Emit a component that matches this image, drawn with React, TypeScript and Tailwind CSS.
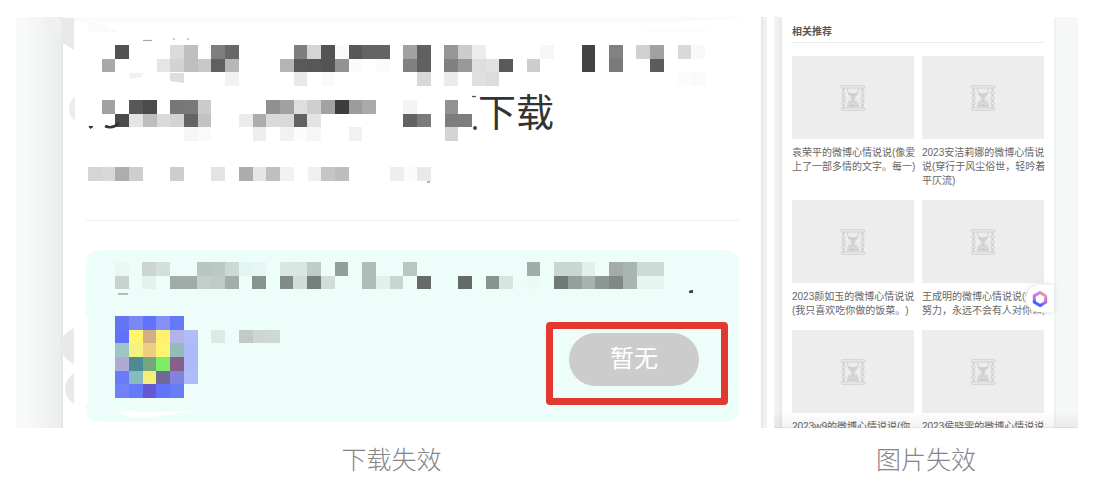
import React from 'react';

type MosaicRow = Record<number, string>;

interface MosaicProps {
  rows: MosaicRow[];
  cols: number;
  start?: number;
  className: string;
}

interface Article {
  id: number;
  lines: string[];
}

const titleTop: MosaicRow[] = [
  {
    2: '#535353', 6: '#dadada', 7: '#bfbfbf', 9: '#7e7e7e', 10: '#686868', 15: '#7f7f7f', 16: '#d5d5d5', 17: '#535353',
    18: '#fafafa', 19: '#585858', 20: '#646464', 21: '#646464', 23: '#a2a2a2', 24: '#606060', 26: '#969696', 27: '#cccccc',
    28: '#ececec', 33: '#f7f7f7', 36: '#434343', 38: '#818181', 40: '#d0d0d0', 41: '#a2a2a2', 43: '#d9d9d9', 44: '#f9f9f9',
  },
  {
    1: '#a9a9a9', 5: '#e5e5e5', 6: '#d3d3d3', 7: '#bfbfbf', 8: '#c8c8c8', 9: '#606060', 10: '#b7b7b7', 14: '#b5b5b5',
    15: '#595959', 16: '#575757', 17: '#535353', 18: '#929292', 19: '#fbfbfb', 21: '#fafafa', 23: '#808080', 24: '#606060',
    26: '#808080', 27: '#999999', 28: '#dedede', 29: '#e2e2e2', 30: '#5a5a5a', 32: '#cdcdcd', 36: '#434343', 38: '#7a7a7a',
    41: '#5c5c5c',
  },
  {
    10: '#f2f2f2', 15: '#e9e9e9', 17: '#fafafa', 24: '#d8d8d8', 26: '#ebebeb', 28: '#e0e0e0', 29: '#dcdcdc', 43: '#fcfcfc',
    44: '#fafafa',
  },
];

const titleBottom: MosaicRow[] = [
  {
    1: '#a2a2a2', 3: '#575757', 4: '#4b4b4b', 6: '#777777', 7: '#797979', 8: '#cbcbcb', 13: '#909090', 14: '#a1a1a1',
    15: '#dedede', 16: '#cfcfcf', 17: '#a2a2a2', 18: '#3c3c3c', 19: '#9c9c9c', 20: '#aaaaaa', 23: '#f4f4f4', 26: '#929292',
  },
  {
    2: '#4b4b4b', 3: '#e5e5e5', 4: '#bdbdbd', 5: '#dadada', 6: '#d3d3d3', 7: '#636363', 8: '#c3c3c3', 11: '#ebebeb',
    12: '#adadad', 13: '#dadada', 14: '#d9d9d9', 15: '#626262', 16: '#e3e3e3', 23: '#626262', 24: '#7b7b7b', 26: '#7d7d7d',
    27: '#7d7d7d',
  },
  { 7: '#f6f6f6', 8: '#fafafa', 12: '#eeeeee', 14: '#f1f1f1', 15: '#fcfcfc', 16: '#f6f6f6', 19: '#f1f1f1', 26: '#d4d4d4' },
];

const metaRow: MosaicRow[] = [
  {
    0: '#d5d5d5', 1: '#d8d8d8', 2: '#adadad', 3: '#cecece', 6: '#cdcdcd', 9: '#e3e3e3', 11: '#acacac', 12: '#e6e6e6',
    13: '#bfbfbf', 14: '#f1f1f1', 16: '#f0f0f0', 17: '#c5c5c5', 18: '#bebebe', 22: '#eeeeee', 23: '#fbfbfb', 24: '#e9e9e9',
  },
];

const cardRows: MosaicRow[] = [
  {
    2: '#e8f9f4', 4: '#cbd6d2', 5: '#d3dfdb', 8: '#bac5c1', 9: '#bbc8c3', 10: '#ccdad5', 11: '#e2f5f0', 12: '#e5f7f2',
    14: '#d9e7e2', 15: '#d8e6e1', 16: '#bfccc8', 18: '#949e9b', 20: '#b0bcb8', 23: '#bac6c2', 32: '#a2ada9', 34: '#cad6d2',
    35: '#cad6d2', 36: '#e1f0eb', 38: '#a2ada9', 39: '#a9b5b1', 40: '#cddbd6', 41: '#cddbd6',
  },
  {
    2: '#c8d3cf', 4: '#e2f3ee', 6: '#a1aca9', 7: '#a1aca9', 8: '#c4cfcb', 9: '#c0cbc7', 10: '#a3aeab', 12: '#88928f',
    14: '#808a87', 15: '#d1ddd9', 16: '#777f7d', 17: '#d0ddd8', 20: '#b0bcb8', 21: '#e0f0eb', 22: '#c9d5d1', 24: '#636a68',
    27: '#636a68', 29: '#89938f', 30: '#d7e5e0', 32: '#eafbf6', 34: '#717977', 35: '#94a09c', 36: '#a7b3af', 37: '#8d9895',
    38: '#808886', 39: '#a9b5b1', 40: '#e5f6f1', 41: '#e5f6f1',
  },
];

const appRows: MosaicRow[] = [
  { 0: '#6675f3', 1: '#7a88f6', 2: '#6272fb', 3: '#8490f5', 4: '#6679f8' },
  { 0: '#6072fb', 1: '#fff66c', 2: '#d3ae83', 3: '#fff170', 4: '#b1b3e9', 5: '#b0bdf9', 7: '#dceae6', 9: '#c0cbc7', 10: '#ccd7d4', 11: '#ced9d6' },
  { 0: '#9ec6c6', 1: '#f6f281', 2: '#edcf84', 3: '#fff471', 4: '#92bbbc', 5: '#aeb9f9' },
  { 0: '#afa9d6', 1: '#4c8b94', 2: '#78a57e', 3: '#7cec6b', 4: '#875f87', 5: '#aeb9f9' },
  { 0: '#687bf9', 1: '#89bac0', 2: '#f5ef7a', 3: '#716995', 4: '#8184de', 5: '#aebcfb' },
  { 0: '#7082f6', 1: '#667af8', 2: '#6658d0', 3: '#6373f9', 4: '#667df6' },
];

const articles: Article[] = [
  { id: 1, lines: ['袁荣平的微博心情说说(像爱', '上了一部多情的文字。每一)'] },
  { id: 2, lines: ['2023安洁莉娜的微博心情说', '说(穿行于风尘俗世，轻吟着', '平仄流)'] },
  { id: 3, lines: ['2023颜如玉的微博心情说说', '(我只喜欢吃你做的饭菜。)'] },
  { id: 4, lines: ['王成明的微博心情说说(你', '努力，永远不会有人对你么,'] },
  { id: 5, lines: ['2023w9的微博心情说说(你'] },
  { id: 6, lines: ['2023侯晓雯的微博心情说说'] },
];

const Mosaic: React.FC<MosaicProps> = ({ rows, cols, start = 0, className }) => (
  <svg
    className={className}
    viewBox={`${start} 0 ${cols} ${rows.length}`}
    preserveAspectRatio="none"
    shapeRendering="crispEdges"
    aria-hidden="true"
  >
    {rows.map((row, y) =>
      Object.entries(row).map(([x, fill]) => (
        <rect key={`${x}-${y}`} x={Number(x)} y={y} width="1" height="1" fill={fill} />
      ))
    )}
  </svg>
);

// Brush marks left around the censored text
const Smudges = () => (
  <svg className="absolute left-0 top-0 pointer-events-none" width="751" height="411" viewBox="16 17 751 411" aria-hidden="true">
    <path d="M63 17h685q-40 5-100 5H74z" fill="#fbfbfb" />
    <path d="M88 22l12 1 20 9H88z" fill="#fafafa" />
    <path d="M605 32q50 0 70-5 25 1 38 5z" fill="#fcfcfc" />
    <path d="M61 18h13v32L61 42z" fill="#e8e9eb" />
    <path d="M54 19h7v21q-8-9-7-21z" fill="#eff1f1" />
    <path d="M75 96v25q-6-5-6-12t6-13z" fill="#ebecee" />
    <path d="M74 328v36q-13-6-13-19 1-12 13-17z" fill="#e8e9eb" />
    <path d="M74 373v31q-9-6-9-15 0-10 9-16z" fill="#e8e9eb" />
    <path d="M129 73h14l-1 4-12 2z" fill="#f2f2f2" />
    <path d="M170 73h14v10l-8-1-6-1z" fill="#dedede" />
    <path d="M143 40.5h9" stroke="#a8a8a8" strokeWidth="1.2" />
    <path d="M173 39h2M187 39h2" stroke="#bbb" strokeWidth="1.5" />
    <path d="M89 126.500h4l-2.500 2z" fill="#333" stroke="#333" />
    <path d="M105 126q5 2.500 10 0l4-3" fill="none" stroke="#333" strokeWidth="2.6" />
    <path d="M472 96.500h4" stroke="#555" strokeWidth="1.3" />
    <circle cx="475" cy="128" r="2" fill="#444" />
    <path d="M427 182h3" stroke="#999" strokeWidth="1.5" />
    <path d="M118 294h10" stroke="#9da5a2" strokeWidth="1.5" />
    <path d="M689 293v-2l2-1h2v3z" fill="#444" />
    <path d="M86 315l2 3v84l-2 3z" fill="#fff" />
    <path d="M118 411q50 2 86-1-22 3-46 6-34 4-40-5z" fill="#fff" />
  </svg>
);

const Hourglass = () => (
  <svg width="26" height="26" viewBox="0 0 26 26" fill="none" stroke="#d0d0d0" aria-hidden="true">
    <rect x="1" y="0.700" width="24" height="2.300" rx="1.100" />
    <rect x="1" y="23" width="24" height="2.300" rx="1.100" />
    <path d="M7.500 3.500q0 6.500 4.700 9.500-4.700 3-4.700 9.500M18.500 3.500q0 6.500-4.700 9.500 4.700 3 4.700 9.500" />
    <path d="M8 7q2.500 1.200 5 1.200T18 7q-1 3.400-4.200 5.300v2.700q3 1.300 4.500 7H7.700q1.500-5.700 4.500-7v-2.700Q9 10.400 8 7z" fill="#cfcfcf" stroke="none" />
    <path d="M10 20q3-4 6 0" stroke="#e6e6e6" />
    <path d="M3.500 3v3M3.500 9.500v2M3.500 14.500v2M3.500 19.500V23M22.500 3v3M22.500 9.500v2M22.500 14.500v2M22.500 19.500V23" strokeWidth="2" />
    <circle cx="3.500" cy="8" r="1.600" />
    <circle cx="3.500" cy="13" r="1.600" />
    <circle cx="3.500" cy="18" r="1.600" />
    <circle cx="22.500" cy="8" r="1.600" />
    <circle cx="22.500" cy="13" r="1.600" />
    <circle cx="22.500" cy="18" r="1.600" />
  </svg>
);

const HexLogo = () => (
  <svg width="16" height="18" viewBox="0 0 16 18" aria-hidden="true">
    <defs>
      <linearGradient id="hexTop" x1="0" y1="0.500" x2="1" y2="0.500">
        <stop offset="0" stopColor="#b673ee" />
        <stop offset="1" stopColor="#ff9c9a" />
      </linearGradient>
      <linearGradient id="hexRight" x1="0.500" y1="0" x2="0.500" y2="1">
        <stop offset="0" stopColor="#f391b4" />
        <stop offset="1" stopColor="#6d5cf5" />
      </linearGradient>
    </defs>
    <path d="M8 0.800L0.800 5v5l3-1V6.700L8 4.300l4.200 2.400L15.200 5z" fill="url(#hexTop)" />
    <path d="M15.200 5v8L8 17.200V13.700l4.200-2.400V6.700z" fill="url(#hexRight)" />
    <path d="M0.800 10V13L8 17.200l3.500-2L8 13.700l-4.200-2.400V9z" fill="#4a63ff" />
  </svg>
);

const App: React.FC = () => {
  return (
    <main className="bg-white pl-4 pr-[22px] pt-[17px] font-['Noto_Sans_CJK_SC','Liberation_Sans',sans-serif]">
      <div className="flex gap-[7px]">
        <figure className="flex-1 min-w-0">
          <div className="relative flex overflow-hidden">
            <div className="w-[47px] shrink-0 bg-linear-to-r from-[#f8faf9] from-20% to-[#eceeee] border-r-2 border-[#e5e7e7]"></div>
            <section className="flex-1 min-w-0 pl-[23px] pr-[22px] pt-7 pb-1.5 bg-white">
              <div className="pl-0.5">
                <Mosaic rows={titleTop} cols={45} className="block w-[617px] h-[41px]" />
                <div className="mt-[14px] flex items-start gap-1.5">
                  <Mosaic rows={titleBottom} cols={28} className="block w-[384px] h-[41px]" />
                  <h1 className="text-[38px] leading-5 text-[#333]">下载</h1>
                </div>
                <Mosaic rows={metaRow} cols={25} className="mt-[26px] block w-[343px] h-[14px]" />
              </div>
              <hr className="mt-[39px] border-0 h-px bg-[#efefef]" />
              <div className="mt-[29px] pt-3 pb-[17px] pl-[29px] pr-[11px] rounded-[13px] bg-[#edfefa]">
                <Mosaic rows={cardRows} cols={40} start={2} className="block w-[549px] h-[27px]" />
                <div className="mt-[27px] flex items-start justify-between">
                  <Mosaic rows={appRows} cols={12} className="block w-[165px] h-[82px]" />
                  <div className="mt-1.5 pl-4 pr-[22px] pt-1 pb-3 border-[7px] border-[#e1382f] rounded">
                    <button
                      type="button"
                      disabled
                      className="flex justify-center w-[130px] h-[53px] rounded-full bg-[#cccccc] text-white text-2xl leading-[48px]"
                    >
                      暂无
                    </button>
                  </div>
                </div>
              </div>
            </section>
            <div className="w-1.5 shrink-0 bg-[#f0f0f0] border-l-2 border-[#e6e7e7]"></div>
            <Smudges />
          </div>
          <figcaption className="mt-3 text-center text-[25px] leading-9 font-light text-[#858588]">下载失效</figcaption>
        </figure>

        <figure className="w-[304px] shrink-0">
          <div className="relative flex h-[411px] overflow-hidden bg-[#f6f8f8]">
            <div className="w-2 shrink-0 bg-linear-to-r from-[#f4f6f5] to-[#eaecec]"></div>
            <section className="relative w-[272px] shrink-0 px-2.5 pt-[7px] bg-white shadow-[0_0_3px_#dfe2e2]">
              <h2 className="h-[19px] text-[10px] leading-[14px] font-bold text-[#555] border-b border-[#ececec]">相关推荐</h2>
              <div className="mt-[13px] grid grid-cols-2 gap-x-2 gap-y-3">
                {articles.map((article) => (
                  <article key={article.id} className="min-w-0">
                    <div className="h-[83px] flex items-center justify-center bg-[#ededed]">
                      <Hourglass />
                    </div>
                    <h3 className="mt-[7px] text-[10px] leading-[14px] [text-spacing-trim:space-all] font-['Liberation_Sans','Noto_Sans_CJK_SC',sans-serif] text-[#666] whitespace-nowrap">
                      {article.lines.map((line) => (
                        <span key={line} className="block">{line}</span>
                      ))}
                    </h3>
                  </article>
                ))}
              </div>
              <button
                type="button"
                aria-label="助手"
                className="absolute right-0 top-[268px] w-7 h-[27px] flex items-center justify-center rounded-l-full bg-white shadow-[0_0_6px_#dddddd]"
              >
                <HexLogo />
              </button>
            </section>
            <div className="absolute inset-x-0 bottom-0 h-4 bg-linear-to-b from-transparent to-black/5 border-b border-black/10"></div>
          </div>
          <figcaption className="mt-3 text-center text-[25px] leading-9 font-light text-[#858588]">图片失效</figcaption>
        </figure>
      </div>
    </main>
  );
};

export default App;
